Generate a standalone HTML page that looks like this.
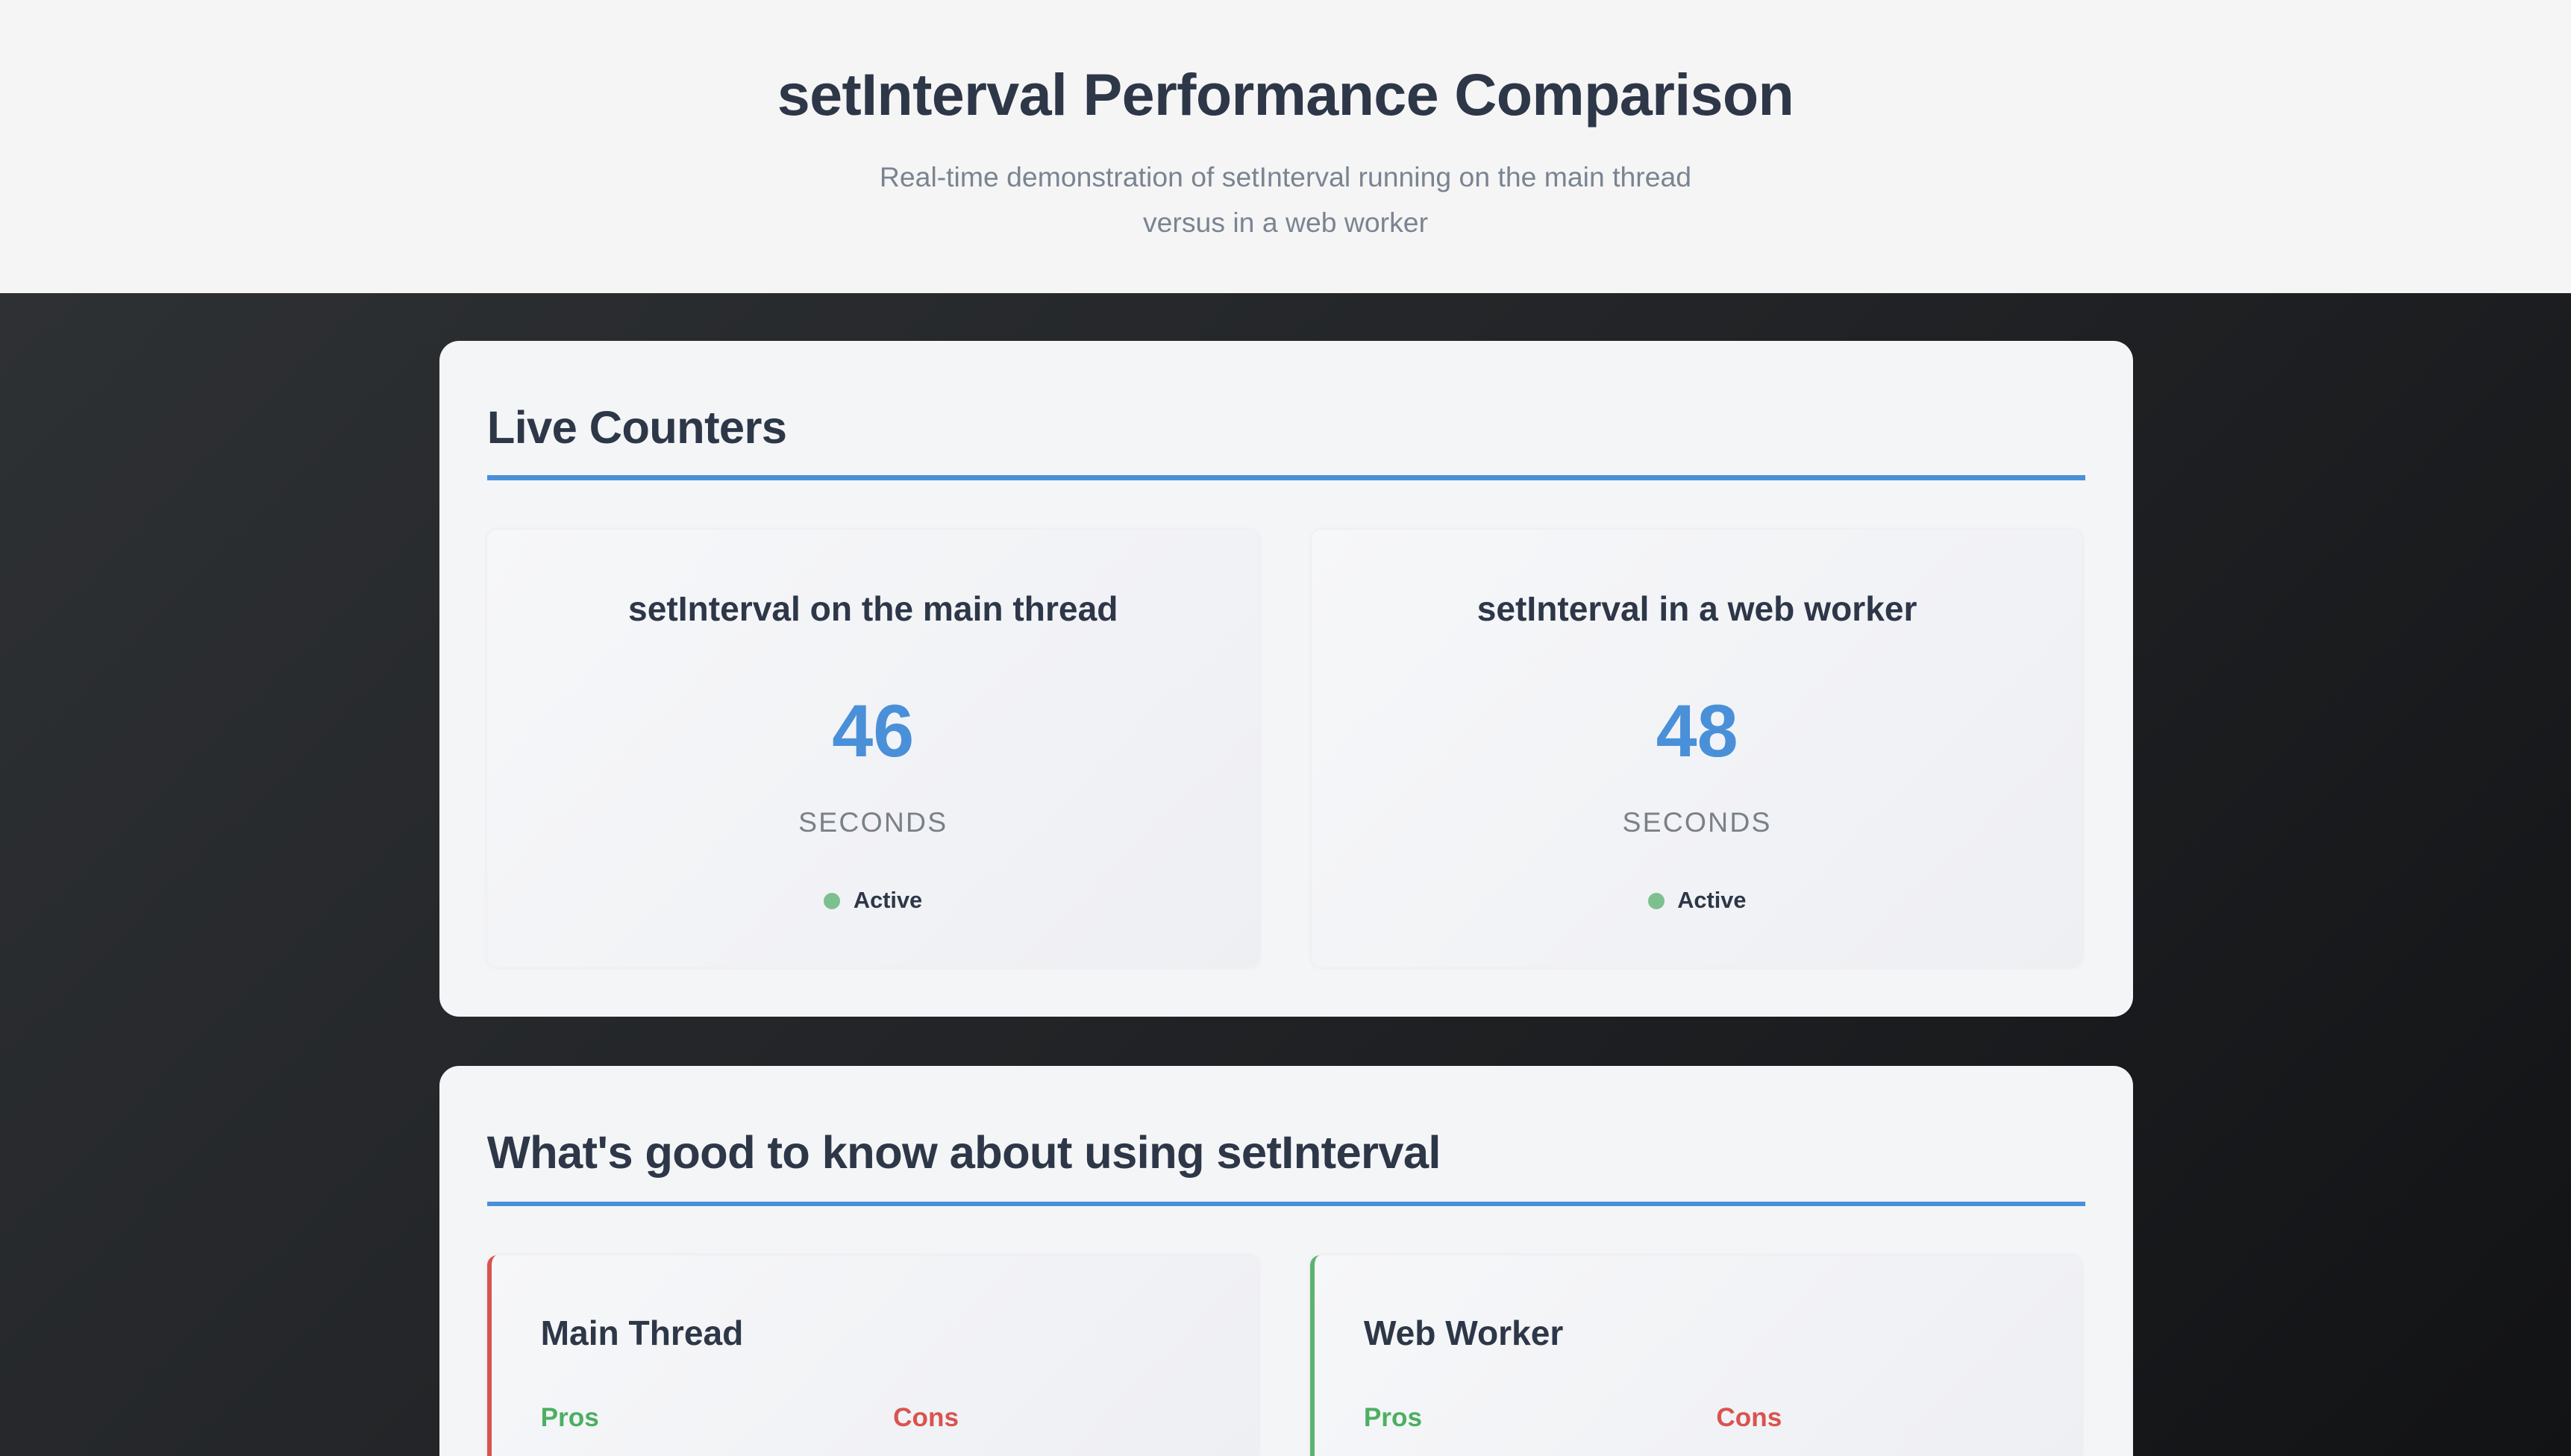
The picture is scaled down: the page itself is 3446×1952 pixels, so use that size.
<!DOCTYPE html>
<html><head><meta charset="utf-8"><style>
html{margin:0;padding:0;width:3446px;height:1952px;overflow:hidden;background:#1c1e20}
body{margin:0;padding:0;width:1568px;height:888px;overflow:hidden;zoom:2.19770;font-family:"Liberation Sans",sans-serif;background:linear-gradient(135deg,#303336 0%,#222427 50%,#121315 100%);position:relative}
.hdr{position:absolute;left:0;top:0;width:1568px;height:179px;background:#f5f5f6;text-align:center}
.hdr h1{margin:0;position:absolute;top:37px;width:100%;font-size:36px;font-weight:700;color:#2d3748;letter-spacing:-0.3px}
.hdr p{margin:0;position:absolute;top:94px;left:0;width:100%;font-size:17px;line-height:28px;color:#7a8491}
.card{position:absolute;left:268px;width:1033px;background:#f4f5f7;border-radius:12px;overflow:hidden}
.card h2{position:absolute;left:29px;margin:0;font-size:28px;font-weight:600;color:#2d3748;letter-spacing:-0.3px}
.line{position:absolute;left:29px;width:975px;height:3px;background:#4a90d9}
.in{position:absolute;background:linear-gradient(135deg,#f6f7f9,#eeeff3);border-radius:6px;box-shadow:0 0 3px rgba(0,0,0,.06);text-align:center;color:#2d3748}
.t{position:absolute;width:100%;font-size:21px;font-weight:600}
.n{position:absolute;width:100%;font-size:45px;font-weight:700;color:#4a90d9}
.s{position:absolute;width:100%;font-size:17px;letter-spacing:1px;color:#7a8088}
.a{position:absolute;width:100%;font-size:14px;font-weight:700}
.a i{display:inline-block;width:10px;height:10px;border-radius:50%;background:#7dc08f;margin-right:8px;vertical-align:-1px}
.h3{position:absolute;left:30px;font-size:21px;font-weight:600;color:#2d3748}
.p{position:absolute;font-size:16px;font-weight:700}
</style></head><body>
<div class="hdr"><h1>setInterval Performance Comparison</h1><p>Real-time demonstration of setInterval running on the main thread<br>versus in a web worker</p></div>
<div class="card" style="top:208px;height:412px">
<h2 style="top:37px">Live Counters</h2>
<div class="line" style="top:82px"></div>
<div class="in" style="left:29px;top:115px;width:471px;height:267px">
<div class="t" style="top:36px">setInterval on the main thread</div>
<div class="n" style="top:97px">46</div>
<div class="s" style="top:169px">SECONDS</div>
<div class="a" style="top:218px"><i></i>Active</div></div>
<div class="in" style="left:532px;top:115px;width:470px;height:267px">
<div class="t" style="top:36px">setInterval in a web worker</div>
<div class="n" style="top:97px">48</div>
<div class="s" style="top:169px">SECONDS</div>
<div class="a" style="top:218px"><i></i>Active</div></div>
</div>
<div class="card" style="top:650px;height:238px;border-radius:12px 12px 0 0">
<h2 style="top:37px">What's good to know about using setInterval</h2>
<div class="line" style="top:83px"></div>
<div class="in" style="left:29px;top:116px;width:468px;height:122px;border-left:3px solid #d9534f;text-align:left;border-radius:6px 6px 0 0">
<div class="h3" style="top:35px">Main Thread</div>
<div class="p" style="left:30px;top:90px;color:#4caf62">Pros</div>
<div class="p" style="left:245px;top:90px;color:#d9534f">Cons</div></div>
<div class="in" style="left:531px;top:116px;width:468px;height:122px;border-left:3px solid #5cb270;text-align:left;border-radius:6px 6px 0 0">
<div class="h3" style="top:35px">Web Worker</div>
<div class="p" style="left:30px;top:90px;color:#4caf62">Pros</div>
<div class="p" style="left:245px;top:90px;color:#d9534f">Cons</div></div>
</div>
</body></html>
